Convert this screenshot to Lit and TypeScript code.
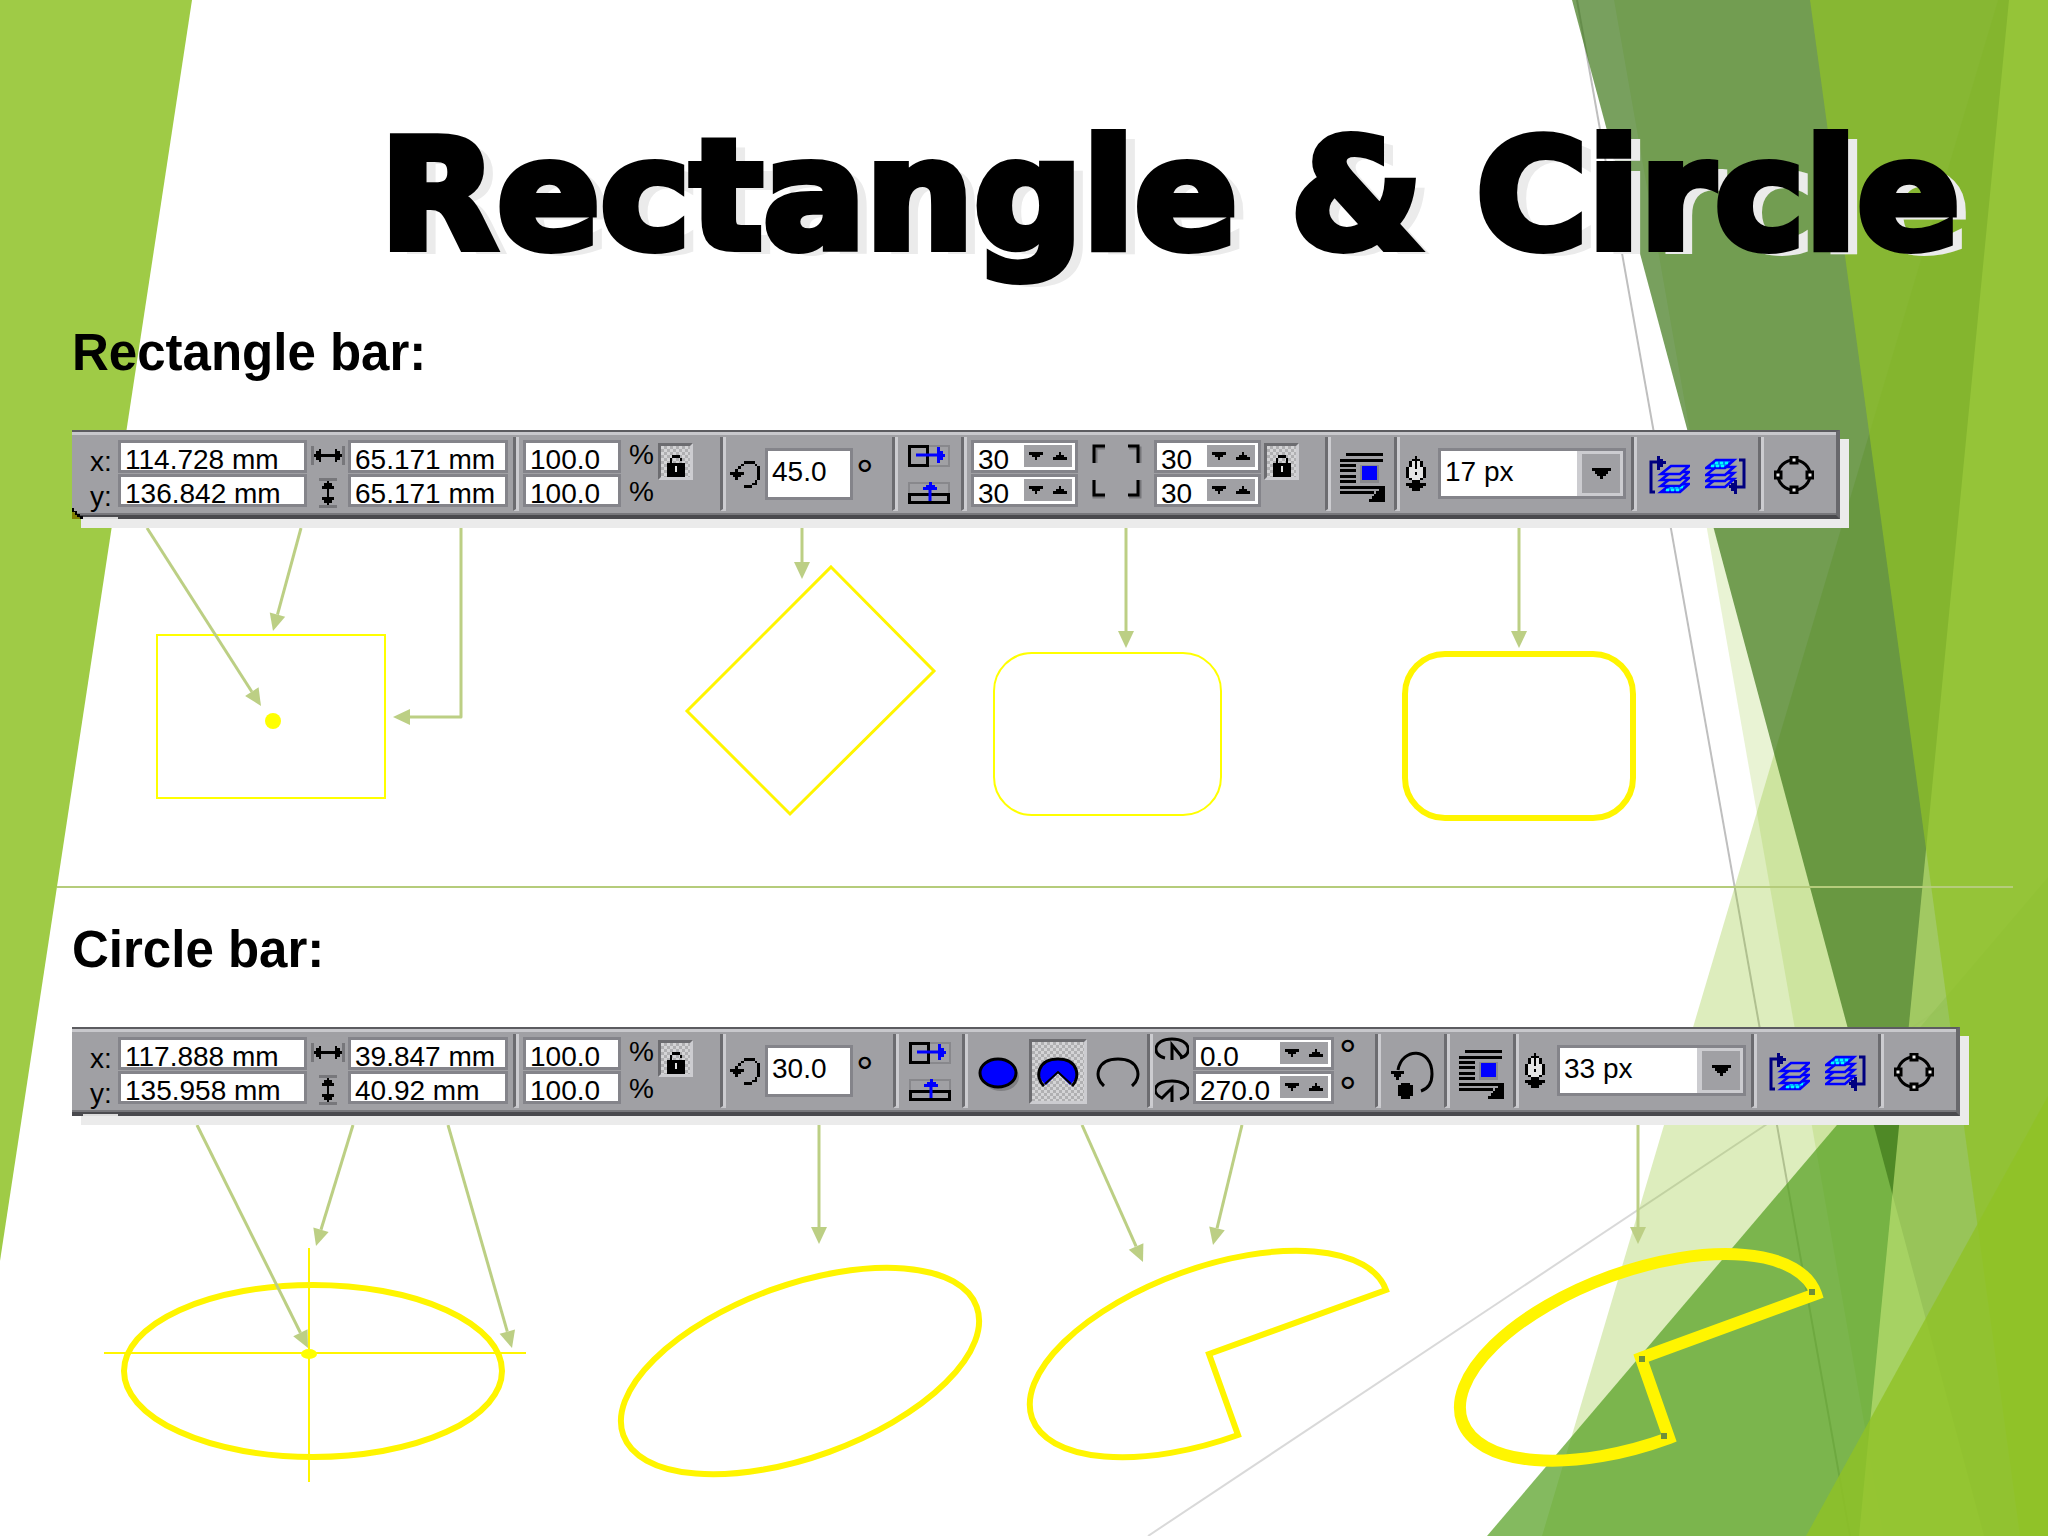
import { LitElement, html, svg, css } from "lit";
import { customElement, property } from "lit/decorators.js";

const INK: Record<string, string> = { "#": "#000", g: "#77777b", w: "#e4e4e4" };

/** Draws a small bitmap, one character per cell, at the given size. */
const bitmap = (rows: string[], width: number, height: number) => html`
  <svg width=${width} height=${height} viewBox="0 0 ${rows[0].length} ${rows.length}"
    preserveAspectRatio="none" shape-rendering="crispEdges" aria-hidden="true">
    ${rows.flatMap((row, y) =>
      [...row].map((c, x) => (INK[c] ? svg`<rect x=${x} y=${y} width="1" height="1" fill=${INK[c]} />` : null))
    )}
  </svg>`;

const widthIcon = () => bitmap([
  "g...........g",
  "g..#.....#..g",
  "g.##.....##.g",
  "g###########g",
  "g.##.....##.g",
  "g..#.....#..g",
  "g...........g",
], 34, 19);

const heightIcon = () => bitmap([
  "ggggggg",
  "...#...",
  "..###..",
  ".#####.",
  "...#...",
  "...#...",
  "...#...",
  ".#####.",
  "..###..",
  "...#...",
  "ggggggg",
], 18, 30);

const lockIcon = (open: boolean) => bitmap([
  "..###..",
  ".#...#.",
  open ? ".#....." : ".#...#.",
  "#######",
  "###w###",
  "###w###",
  "#######",
  "#######",
], 18, 22);

const rotateIcon = () => bitmap([
  ".....####..",
  "....#....#.",
  "...#......#",
  "..#.......#",
  "#####.....#",
  ".###......#",
  "..#.......#",
  ".........#.",
  "........##.",
  ".....###...",
], 30, 27);

const penIcon = () => bitmap([
  "...#...",
  "..###..",
  ".#w#w#.",
  ".#w#w#.",
  "#ww#ww#",
  "#wwwww#",
  "#ww#ww#",
  "#wwwww#",
  ".#www#.",
  "..###..",
  "#######",
  ".#####.",
  "..###..",
], 20, 35);

const downArrow = () => bitmap(["#####", ".###.", "..#.."], 14, 8);
const upArrow = () => bitmap(["..#..", ".###.", "#####"], 14, 8);

const mirrorH = () => html`
  <svg width="42" height="22" viewBox="0 0 42 22" aria-hidden="true">
    <rect x="20" y="1" width="21" height="20" fill="none" stroke="#88888c" stroke-width="2" />
    <rect x="1.5" y="1.5" width="18" height="19" fill="none" stroke="#000" stroke-width="3" />
    <path d="M8 10H30" stroke="#00f" stroke-width="3" />
    <path d="M29 2H32V6H35V9H37V12H35V15H32V18H29Z" fill="#00f" />
  </svg>`;

const mirrorV = () => html`
  <svg width="42" height="22" viewBox="0 0 42 22" aria-hidden="true">
    <rect x="1" y="1" width="40" height="12" fill="none" stroke="#88888c" stroke-width="2" />
    <rect x="1.5" y="12.5" width="39" height="8" fill="none" stroke="#000" stroke-width="3" />
    <path d="M22 19V3" stroke="#00f" stroke-width="3" />
    <path d="M21 0H24V3H27V5H29V8H15V5H18V3H21Z" fill="#00f" />
  </svg>`;

const cornersIcon = () => html`
  <svg width="50" height="56" viewBox="0 0 50 56" aria-hidden="true" fill="none">
    <path d="M13 4H4V19M37 4H48V19M13 53H2V36M37 53H48V36" stroke="#77777b" stroke-width="3" />
    <path d="M13 2H2V19M36 2H46V19M13 51H2V36M36 51H46V36" stroke="#000" stroke-width="3" />
  </svg>`;

const wrapIcon = () => html`
  <svg width="46" height="49" viewBox="0 0 46 49" shape-rendering="crispEdges" aria-hidden="true">
    <path d="M6 0H43V3H6ZM0 6H43V9H0ZM0 11H16V14H0ZM0 16H16V19H0ZM0 22H16V25H0ZM0 27H16V30H0ZM0 33H42V36H0ZM0 38H34V41H0Z" />
    <rect x="20" y="12" width="19" height="18" fill="#88888c" />
    <rect x="22" y="13" width="15" height="14" fill="#00f" />
    <path d="M45 33V49H29V46H32V43H34V41H36V38H39V35H42V33Z" />
  </svg>`;

const plate = (x: number, y: number, fill: string) => svg`
  <path d="M${x + 11} ${y}H${x + 29}L${x + 20} ${y + 8}H${x + 1}Z" fill=${fill} stroke="#00f" stroke-width="2.6" />`;

const speckle = (x: number, y: number) => svg`
  <path d="M${x + 10} ${y + 3}H${x + 24}M${x + 6} ${y + 6}H${x + 20}" stroke="#0ff" stroke-width="2.5" stroke-dasharray="3 2" />`;

const toFrontIcon = () => html`
  <svg width="41" height="38" viewBox="0 0 41 38" aria-hidden="true">
    ${plate(11, 28, "#0080ff")}${speckle(11, 28)}
    ${plate(11, 22, "#a0a0a4")}${plate(11, 16, "#a0a0a4")}${plate(11, 10, "#a0a0a4")}
    <path d="M6 36H2V6H12" fill="none" stroke="#000080" stroke-width="3" />
    <path d="M8 0H11V3H14V5H17V8H14V11H11V14H8Z" fill="#000080" />
  </svg>`;

const toBackIcon = () => html`
  <svg width="41" height="38" viewBox="0 0 41 38" aria-hidden="true">
    ${plate(0, 23, "#a0a0a4")}${plate(0, 17, "#a0a0a4")}${plate(0, 11, "#a0a0a4")}
    ${plate(0, 4, "#0080ff")}${speckle(0, 4)}
    <path d="M34 4H39V31H30" fill="none" stroke="#000080" stroke-width="3" />
    <path d="M32 24H29V27H26V29H24V32H26V35H29V38H32Z" fill="#000080" />
  </svg>`;

const nodesIcon = () => html`
  <svg width="40" height="38" viewBox="0 0 40 38" aria-hidden="true">
    <ellipse cx="20" cy="19" rx="16" ry="15" fill="none" stroke="#000" stroke-width="3" />
    ${[[20, 4], [20, 34], [4, 19], [36, 19]].map(
      ([x, y]) => svg`<rect x=${x - 3} y=${y - 3} width="6" height="6" fill="#eee" stroke="#000" stroke-width="3" />`
    )}
  </svg>`;

const ellipseIcon = () => html`
  <svg width="42" height="36" viewBox="0 0 42 36" aria-hidden="true">
    <ellipse cx="23" cy="20" rx="18" ry="14" fill="#808084" />
    <ellipse cx="20" cy="16" rx="18" ry="14" fill="#00f" stroke="#000" stroke-width="3" />
  </svg>`;

const pieIcon = () => html`
  <svg width="42" height="30" viewBox="0 0 42 30" aria-hidden="true">
    <path d="M9 28C-2 20 0 2 21 2S44 20 33 28L21 16Z" fill="#00f" />
    <path d="M7 29C-3 20 1 2 21 2S44 20 35 29" fill="none" stroke="#000" stroke-width="3" />
    <path d="M8 27L21 15L34 27" fill="none" stroke="#000" stroke-width="2" />
  </svg>`;

const arcIcon = () => html`
  <svg width="44" height="30" viewBox="0 0 44 30" aria-hidden="true">
    <path d="M8 29C-3 20 1 2 22 2S47 20 36 29" fill="none" stroke="#000" stroke-width="3" />
  </svg>`;

const startAngleIcon = () => html`
  <svg width="34" height="24" viewBox="0 0 34 24" aria-hidden="true" fill="none" stroke="#000" stroke-width="3">
    <path d="M10 21C-4 18-2 2 17 2S38 18 25 21M17 23V8L27 20" />
  </svg>`;

const endAngleIcon = () => html`
  <svg width="34" height="24" viewBox="0 0 34 24" aria-hidden="true" fill="none" stroke="#000" stroke-width="3">
    <path d="M7 19C-4 14-2 2 17 2S38 17 25 20M17 23V9L6 20" />
  </svg>`;

const directionIcon = () => html`
  <svg width="43" height="50" viewBox="0 0 43 50" aria-hidden="true">
    <path d="M7 19C11-4 41-4 41 23C41 33 36 38 30 40" fill="none" stroke="#000" stroke-width="3" />
    <path d="M0 20H13V23H10V26H8V29H5V26H3V23H0Z" />
    <path d="M10 32H19V34H22V45H19V48H10V45H7V34H10Z" />
  </svg>`;

@customElement("number-field")
class NumberField extends LitElement {
  @property() label = "";
  @property() value = "";
  @property({ type: Boolean }) spin = false;
  @property({ type: Boolean, reflect: true }) tall = false;

  static styles = css`
    :host { display: block; height: 33px; }
    :host([tall]) { height: 52px; }
    .field {
      display: flex; box-sizing: border-box; height: 100%;
      border: 3px solid #84848a; background: #fff; overflow: hidden;
    }
    .entry {
      flex: 1; min-width: 0; box-sizing: border-box; height: 100%; border: 0; outline: 0; background: none;
      padding: 6px 0 0 4px; color: #000;
      font: 28px/23px "Liberation Sans", Arial, sans-serif;
    }
    :host([tall]) .entry { padding: 0 0 4px 4px; }
    .spin { display: flex; width: 48px; height: 22px; margin: 2px 3px 0 0; background: #a0a0a4; }
    .step { flex: 1; display: grid; place-items: center; padding: 0; border: 0; background: none; }
  `;

  render() {
    return html`
      <div class="field">
        <input class="entry" aria-label=${this.label} .value=${this.value} />
        ${this.spin
          ? html`<div class="spin">
              <button class="step" aria-label="Decrease ${this.label}">${downArrow()}</button>
              <button class="step" aria-label="Increase ${this.label}">${upArrow()}</button>
            </div>`
          : null}
      </div>`;
  }
}

@customElement("width-picker")
class WidthPicker extends LitElement {
  @property() value = "";

  static styles = css`
    :host { display: block; height: 51px; }
    .box {
      display: grid; grid-template-columns: 1fr 46px; box-sizing: border-box; height: 100%;
      border: 3px solid #84848a; background: #fff;
    }
    .choice {
      grid-area: 1 / 1 / 2 / 3; min-width: 0; appearance: none; border: 0; outline: 0; background: none;
      padding: 0 0 4px 4px; color: #000;
      font: 28px/38px "Liberation Sans", Arial, sans-serif;
    }
    .arrow {
      grid-area: 1 / 2; display: grid; place-items: center; pointer-events: none;
      background: #a0a0a4; border: 3px solid #ccccd0; border-left-width: 5px;
    }
  `;

  render() {
    return html`
      <div class="box">
        <select class="choice" aria-label="Outline width"><option selected>${this.value}</option></select>
        <span class="arrow">${bitmap(["#######", ".#####.", "..###..", "...#..."], 19, 11)}</span>
      </div>`;
  }
}

@customElement("property-bar")
class PropertyBar extends LitElement {
  @property() kind: "rectangle" | "circle" = "rectangle";

  static styles = css`
    :host { display: block; }
    .bar {
      position: relative; display: grid; box-sizing: border-box; height: 89px;
      border-top: 2px solid #5c5c60; border-right: 4px solid #68686c; border-bottom: 4px solid #4a4a4e;
      background: #a0a0a4; box-shadow: inset 0 3px #c8c8cc, inset 0 -2px #77777b, 9px 9px #ebebeb;
    }
    .rectangle { grid-template-columns: 441fr 207fr 172fr 69fr 364fr 69fr 237fr 127fr 78fr; }
    .circle { grid-template-columns: 441fr 207fr 173fr 69fr 185fr 228fr 69fr 69fr 238fr 127fr 78fr; }
    .foot { position: absolute; left: 11px; bottom: -4px; width: 35px; height: 2px; background: #dcdcdc; }
    .notch { position: absolute; left: 0; bottom: -4px; }
    .group { display: flex; align-items: flex-start; min-width: 0; padding: 8px 0 0 10px; }
    .group + .group { position: relative; }
    .group + .group::before {
      content: ""; position: absolute; left: 0; top: 5px; width: 3px; height: 72px;
      border-left: 3px solid #6c6c70; border-bottom: 2px solid #c8c8cc; background: #ccccd0;
    }
    .stack { display: flex; flex-direction: column; gap: 1px; }
    .position { padding-left: 18px; }
    .names { width: 28px; padding-top: 4px; }
    .name, .percent, .degree { display: block; color: #000; font-family: "Liberation Sans", Arial, sans-serif; }
    .name { font-size: 28px; line-height: 35px; height: 35px; }
    .percent { font-size: 28px; line-height: 30px; height: 37px; }
    .degree { font-size: 44px; line-height: 52px; }
    .xy { width: 189px; }
    .arrows { width: 41px; align-items: center; gap: 13px; padding-top: 6px; }
    .wh { width: 160px; }
    .scale { width: 98px; }
    .percents { width: 29px; padding-left: 8px; }
    .tool {
      display: grid; place-items: center; padding: 0; border: 0; background: none;
    }
    .pressed {
      border: 3px solid #6c6c70; border-right-color: #ccccd0; border-bottom-color: #ccccd0;
      background: repeating-conic-gradient(#b0b0b2 0 25%, #d4d4d6 0 50%) 0 0 / 6px 6px;
    }
    .lock { width: 35px; height: 37px; margin-top: 3px; place-items: end center; }
    .angle { padding-left: 10px; }
    .turn { margin: 21px 5px 0 0; }
    .turned { width: 88px; margin-top: 8px; }
    .turned + .degree { margin: 10px 0 0 3px; }
    .mirror { padding: 13px 0 0 16px; }
    .mirror .stack { gap: 15px; }
    .corner { width: 107px; }
    .corners { margin: 4px 12px 0 14px; }
    .corner + .lock { margin-left: 3px; }
    .wrap { padding: 21px 0 0 15px; }
    .outline { padding-left: 12px; }
    .pen { margin: 16px 12px 0 0; }
    .picker { flex: 1; margin: 8px 5px 0 0; }
    .order { padding: 24px 0 0 18px; gap: 15px; }
    .nodes { padding: 24px 0 0 16px; }
    .shape { gap: 9px; padding: 10px 0 0 16px; }
    .shape .tool { margin-top: 18px; }
    .shape .pressed { width: 58px; height: 65px; margin: 0; }
    .span { padding-left: 8px; gap: 4px; }
    .span .dials { gap: 18px; }
    .limit { width: 141px; }
    .degrees { padding-left: 1px; }
    .degrees .degree { line-height: 37px; height: 37px; }
    .direction { padding: 22px 0 0 16px; }
  `;

  private geometry(x: string, y: string, w: string, h: string) {
    return html`
      <div class="group position">
        <div class="names"><span class="name">x:</span><span class="name">y:</span></div>
        <div class="stack xy">
          <number-field label="x" value=${x}></number-field>
          <number-field label="y" value=${y}></number-field>
        </div>
        <div class="stack arrows">${widthIcon()}${heightIcon()}</div>
        <div class="stack wh">
          <number-field label="Width" value=${w}></number-field>
          <number-field label="Height" value=${h}></number-field>
        </div>
      </div>
      <div class="group">
        <div class="stack scale">
          <number-field label="Horizontal scale" value="100.0"></number-field>
          <number-field label="Vertical scale" value="100.0"></number-field>
        </div>
        <div class="percents"><span class="percent">%</span><span class="percent">%</span></div>
        <button class="tool pressed lock" aria-label="Non-proportional scaling">${lockIcon(true)}</button>
      </div>`;
  }

  private rotation(angle: string) {
    return html`
      <div class="group angle">
        <span class="turn">${rotateIcon()}</span>
        <number-field class="turned" tall label="Angle of rotation" value=${angle}></number-field>
        <span class="degree">°</span>
      </div>
      <div class="group mirror">
        <div class="stack">
          <button class="tool" aria-label="Mirror horizontally">${mirrorH()}</button>
          <button class="tool" aria-label="Mirror vertically">${mirrorV()}</button>
        </div>
      </div>`;
  }

  private corner(side: string) {
    return html`
      <div class="stack corner">
        <number-field spin label="Top ${side} corner" value="30"></number-field>
        <number-field spin label="Bottom ${side} corner" value="30"></number-field>
      </div>`;
  }

  private finish(width: string) {
    return html`
      <div class="group wrap"><button class="tool" aria-label="Wrap text">${wrapIcon()}</button></div>
      <div class="group outline">
        <span class="pen">${penIcon()}</span>
        <width-picker class="picker" value=${width}></width-picker>
      </div>
      <div class="group order">
        <button class="tool" aria-label="To front">${toFrontIcon()}</button>
        <button class="tool" aria-label="To back">${toBackIcon()}</button>
      </div>
      <div class="group nodes"><button class="tool" aria-label="Convert to curves">${nodesIcon()}</button></div>
      <span class="foot"></span>`;
  }

  render() {
    return this.kind === "rectangle"
      ? html`
          <div class="bar rectangle" role="toolbar" aria-label="Rectangle bar">
            ${this.geometry("114.728 mm", "136.842 mm", "65.171 mm", "65.171 mm")}
            ${this.rotation("45.0")}
            <div class="group">
              ${this.corner("left")}
              <span class="corners">${cornersIcon()}</span>
              ${this.corner("right")}
              <button class="tool pressed lock" aria-label="Round corners together">${lockIcon(false)}</button>
            </div>
            ${this.finish("17 px")}
            <svg class="notch" width="11" height="11" viewBox="0 0 11 11" aria-hidden="true">
              <path d="M0 2L9 11H0Z" fill="#808000" />
              <path d="M0 0H2V3H5V6H8V8H11V11H8V9H5V7H3V4H0Z" />
            </svg>
          </div>`
      : html`
          <div class="bar circle" role="toolbar" aria-label="Circle bar">
            ${this.geometry("117.888 mm", "135.958 mm", "39.847 mm", "40.92 mm")}
            ${this.rotation("30.0")}
            <div class="group shape">
              <button class="tool" aria-label="Ellipse">${ellipseIcon()}</button>
              <button class="tool pressed" aria-label="Pie">${pieIcon()}</button>
              <button class="tool" aria-label="Arc">${arcIcon()}</button>
            </div>
            <div class="group span">
              <div class="stack dials">${startAngleIcon()}${endAngleIcon()}</div>
              <div class="stack limit">
                <number-field spin label="Starting angle" value="0.0"></number-field>
                <number-field spin label="Ending angle" value="270.0"></number-field>
              </div>
              <div class="degrees"><span class="degree">°</span><span class="degree">°</span></div>
            </div>
            <div class="group direction"><button class="tool" aria-label="Direction">${directionIcon()}</button></div>
            ${this.finish("33 px")}
          </div>`;
  }
}

type Point = [number, number];

/** A connector through the given points that ends in a filled head. */
const arrow = (...points: Point[]) => {
  const [tx, ty] = points[points.length - 1];
  const [px, py] = points[points.length - 2];
  const length = Math.hypot(tx - px, ty - py);
  const ux = (tx - px) / length;
  const uy = (ty - py) / length;
  const bx = tx - ux * 17;
  const by = ty - uy * 17;
  const line = [...points.slice(0, -1), [bx, by]].map((p) => p.join(" ")).join("L");
  return svg`
    <path class="wire" d="M${line}" />
    <path class="head" d="M${tx} ${ty}L${bx - uy * 8} ${by + ux * 8}L${bx + uy * 8} ${by - ux * 8}Z" />`;
};

@customElement("app-root")
class AppRoot extends LitElement {
  static styles = css`
    :host { display: block; }
    .slide { position: relative; isolation: isolate; overflow: hidden; min-height: 100vh; background: #fff; }
    .backdrop { position: absolute; inset: 0; z-index: -1; width: 100%; height: 100%; }
    .title {
      margin: 0; padding: 101px 88px 0 72px; text-align: right; white-space: nowrap; color: #000;
      font: bold 152px/190px "DejaVu Sans", Verdana, sans-serif;
      -webkit-text-stroke: 8px #000;
      text-shadow: 13px 6px #ebebeb;
    }
    .heading {
      margin: 0; padding: 32px 72px 47px; color: #000;
      font: bold 51px/60px "Liberation Sans", Arial, sans-serif;
    }
    .rectangle-bar { margin: 0 208px 9px 72px; }
    .circle-bar { margin: 0 88px 9px 72px; }
    .rule { height: 2px; margin: 0 35px 0 57px; border: 0; background: #b5cc7b; }
    .drawing { display: block; width: 100%; height: auto; fill: none; }
    .wire { stroke: #bccf84; stroke-width: 3; stroke-linejoin: round; }
    .head { fill: #bccf84; }
    .shape { stroke: #fff500; stroke-width: 2; }
    .medium { stroke-width: 3; }
    .bold { stroke-width: 6; }
    .heavy { stroke-width: 12; }
    .dot { fill: #ff0; }
    .yellow { stroke: #ff0; }
    .node { fill: #6f8f3a; }
  `;

  private backdrop() {
    return html`
      <svg class="backdrop" viewBox="0 0 2048 1536" preserveAspectRatio="none" aria-hidden="true">
        <path d="M0 0H192L0 1261Z" fill="#9fcb46" />
        <path d="M1577 0L1850 1536" stroke="#bfbfbf" stroke-width="2" />
        <path d="M1148 1536L2048 937" stroke="#d9d9d9" stroke-width="2" />
        <path d="M1614 0H2048V1536H1884Z" fill="#90c226" fill-opacity=".2" />
        <path d="M1998 0H2048V1536H1542Z" fill="#90c226" fill-opacity=".3" />
        <path d="M2048 877V1536H1487Z" fill="#54a021" fill-opacity=".72" />
        <path d="M1572 0H2048V1536H1984Z" fill="#3f7819" fill-opacity=".7" />
        <path d="M2009 0H2048V1536H1859Z" fill="#c0e474" fill-opacity=".65" />
        <path d="M1810 0H2048V1536H2020Z" fill="#90c226" fill-opacity=".7" />
        <path d="M2048 1096V1536H1806Z" fill="#90c226" fill-opacity=".8" />
      </svg>`;
  }

  render() {
    return html`
      <main class="slide">
        ${this.backdrop()}
        <h1 class="title">Rectangle &amp; Circle</h1>

        <h2 class="heading">Rectangle bar:</h2>
        <property-bar class="rectangle-bar" kind="rectangle"></property-bar>
        <svg class="drawing" viewBox="0 528 2048 358" role="img" aria-label="Rectangles drawn with each setting">
          <rect class="shape yellow" x="157" y="635" width="228" height="163" />
          <circle class="dot" cx="273" cy="721" r="8" />
          <path class="shape medium" d="M831 567L934 671L790 814L687 711Z" />
          <rect class="shape yellow" x="994" y="653" width="227" height="162" rx="38" />
          <rect class="shape bold" x="1405" y="654" width="228" height="164" rx="40" />
          ${arrow([147, 528], [261, 706])}
          ${arrow([301, 528], [273, 631])}
          ${arrow([461, 528], [461, 717], [393, 717])}
          ${arrow([802, 528], [802, 579])}
          ${arrow([1126, 528], [1126, 648])}
          ${arrow([1519, 528], [1519, 648])}
        </svg>

        <hr class="rule" />

        <h2 class="heading">Circle bar:</h2>
        <property-bar class="circle-bar" kind="circle"></property-bar>
        <svg class="drawing" viewBox="0 1125 2048 411" role="img" aria-label="Ellipses drawn with each setting">
          <path class="shape" d="M104 1353H526M309 1248V1482" />
          <ellipse class="shape bold" cx="313" cy="1371" rx="189" ry="86" />
          <ellipse class="dot" cx="309" cy="1354" rx="8" ry="5" />
          <ellipse class="shape bold" cx="800" cy="1371" rx="188" ry="86" transform="rotate(-20 800 1371)" />
          <path class="shape bold" d="M1209 1354L1386 1290A188 86 -20 1 0 1238 1435Z" />
          <path class="shape heavy" d="M1641 1358L1816 1294A188 86 -20 1 0 1669 1438Z" />
          <path class="node" d="M1809 1289h6v6h-6ZM1639 1356h6v6h-6ZM1661 1433h6v6h-6Z" />
          ${arrow([197, 1125], [308, 1348])}
          ${arrow([353, 1125], [316, 1246])}
          ${arrow([448, 1125], [512, 1348])}
          ${arrow([819, 1125], [819, 1244])}
          ${arrow([1082, 1125], [1143, 1262])}
          ${arrow([1242, 1125], [1213, 1245])}
          ${arrow([1638, 1125], [1638, 1244])}
        </svg>
      </main>`;
  }
}
